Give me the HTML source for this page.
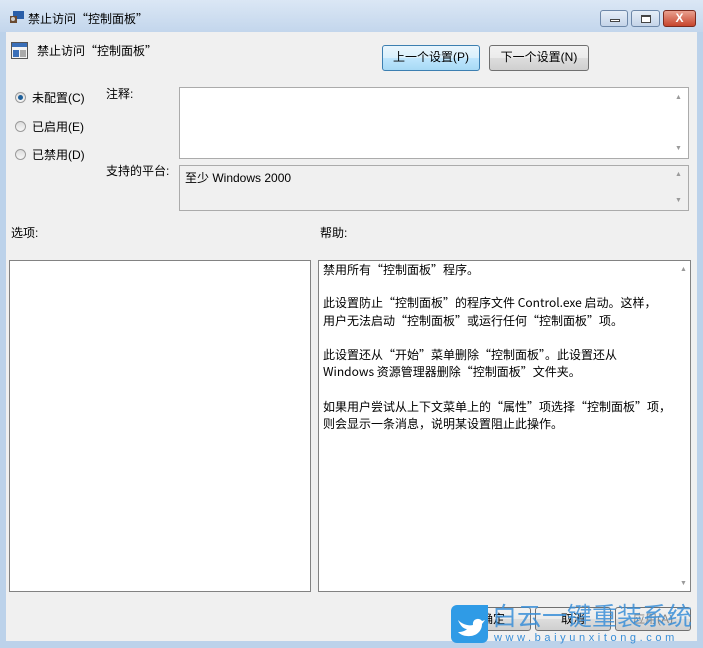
<!DOCTYPE html>
<html><head><meta charset="utf-8"><style>
*{margin:0;padding:0;box-sizing:border-box}
body{width:703px;height:648px;overflow:hidden;background:#bcd2ea;font-family:"Liberation Sans","Noto Sans CJK SC",sans-serif;font-size:12px;color:#000;position:relative}
.a{position:absolute;white-space:nowrap}
.h{font-family:"Noto Sans CJK SC",sans-serif;line-height:16px}
.title{left:0;top:0;width:703px;height:32px;background:linear-gradient(#dbe7f5,#c3d6ec)}
.body{left:6px;top:32px;width:691px;height:609px;background:#f0f0f0}
.btn{position:absolute;border:1px solid #707070;border-radius:3px;background:linear-gradient(#f2f2f2 0%,#ebebeb 50%,#dddddd 51%,#cfcfcf 100%);text-align:center;line-height:23px;font-size:12px}
.box{position:absolute;border:1px solid #8f8f8f;background:#fff}
.rad{position:absolute;width:11px;height:11px;border-radius:50%;border:1px solid #9a9a9a;background:linear-gradient(#ddd,#f8f8f8)}
.sa{position:absolute;color:#9a9a9a;font-size:7px}
.wb{position:absolute;border:1px solid #6d87a8;border-radius:3px}
</style></head><body>
<div class="a title"></div>
<div class="a body"></div>
<svg class="a" style="left:9px;top:10px" width="16" height="14"><rect x="4" y="1" width="11" height="8" fill="#2a5ea8"/><rect x="1" y="6" width="7" height="7" fill="#6a4a30"/><circle cx="4" cy="9" r="2" fill="#ccc"/></svg>
<div class="a" style="left:28px;top:10px">禁止访问<span class="h">“</span>控制面板<span class="h">”</span></div>
<div class="wb" style="left:600px;top:10px;width:28px;height:17px;background:linear-gradient(#e6eef8,#c4d4e8)"><div class="a" style="left:9px;top:8px;width:10px;height:3px;border:1px solid #444;background:#fff"></div></div>
<div class="wb" style="left:631px;top:10px;width:29px;height:17px;background:linear-gradient(#e6eef8,#c4d4e8)"><div class="a" style="left:9px;top:4px;width:10px;height:8px;border:1px solid #444;border-top-width:2px;background:#fff"></div></div>
<div class="wb" style="left:663px;top:10px;width:33px;height:17px;background:linear-gradient(#e9a08f,#c7452c);border-color:#7a2a1e;color:#fff;font-weight:bold;text-align:center;line-height:15px;font-size:12px">X</div>
<svg class="a" style="left:11px;top:42px" width="17" height="17"><rect x="0.5" y="0.5" width="16" height="16" fill="#f4f4f4" stroke="#555"/><rect x="1" y="1" width="15" height="4" fill="#3a6fb8"/><rect x="2" y="8" width="6" height="7" fill="#3a6fb8"/><rect x="9" y="8" width="6" height="7" fill="#aaa"/></svg>
<div class="a" style="left:37px;top:42px">禁止访问<span class="h">“</span>控制面板<span class="h">”</span></div>
<div class="btn" style="left:382px;top:45px;width:98px;height:26px;border-color:#3c7fb1;background:linear-gradient(#eaf6fd 0%,#d9f0fc 50%,#bee6fd 51%,#a7d9f5 100%)">上一个设置(P)</div>
<div class="btn" style="left:489px;top:45px;width:100px;height:26px">下一个设置(N)</div>
<div class="rad" style="left:15px;top:92px"><div class="a" style="left:2px;top:2px;width:5px;height:5px;border-radius:50%;background:#1d5f9a"></div></div>
<div class="a" style="left:32px;top:89px">未配置(C)</div>
<div class="rad" style="left:15px;top:121px"></div>
<div class="a" style="left:32px;top:118px">已启用(E)</div>
<div class="rad" style="left:15px;top:149px"></div>
<div class="a" style="left:32px;top:146px">已禁用(D)</div>
<div class="a" style="left:106px;top:85px">注释:</div>
<div class="box" style="left:179px;top:87px;width:510px;height:72px;border-color:#ababab"></div>
<div class="sa" style="left:675px;top:94px">▲</div><div class="sa" style="left:675px;top:145px">▼</div>
<div class="a" style="left:106px;top:162px">支持的平台:</div>
<div class="box" style="left:179px;top:165px;width:510px;height:46px;background:#f0f0f0;border-color:#ababab"></div>
<div class="a" style="left:185px;top:169px">至少 Windows 2000</div>
<div class="sa" style="left:675px;top:171px">▲</div><div class="sa" style="left:675px;top:197px">▼</div>
<div class="a" style="left:11px;top:224px">选项:</div>
<div class="a" style="left:320px;top:224px">帮助:</div>
<div class="box" style="left:9px;top:260px;width:302px;height:332px;border-color:#828282"></div>
<div class="box" style="left:318px;top:260px;width:373px;height:332px;border-color:#828282"></div>
<div class="sa" style="left:680px;top:266px">▲</div><div class="sa" style="left:680px;top:580px">▼</div>
<div class="a h" style="left:323px;top:262px">禁用所有“控制面板”程序。</div>
<div class="a h" style="left:323px;top:295px">此设置防止“控制面板”的程序文件 Control.exe 启动。这样，</div>
<div class="a h" style="left:323px;top:313px">用户无法启动“控制面板”或运行任何“控制面板”项。</div>
<div class="a h" style="left:323px;top:347px">此设置还从“开始”菜单删除“控制面板”。此设置还从</div>
<div class="a h" style="left:323px;top:364px">Windows 资源管理器删除“控制面板”文件夹。</div>
<div class="a h" style="left:323px;top:399px">如果用户尝试从上下文菜单上的“属性”项选择“控制面板”项，</div>
<div class="a h" style="left:323px;top:416px">则会显示一条消息，说明某设置阻止此操作。</div>
<div class="btn" style="left:455px;top:607px;width:76px;height:24px">确定</div>
<div class="btn" style="left:535px;top:607px;width:76px;height:24px">取消</div>
<div class="btn" style="left:615px;top:607px;width:76px;height:24px;color:#888">应用(A)</div>
<div class="a" style="left:451px;top:605px;width:37px;height:38px;background:#2f9be6;border-radius:6px 0 6px 6px"></div>
<svg class="a" style="left:455px;top:612px" width="30" height="26"><path d="M3 8 C8 13 14 14 18 13 C17 7 24 5 27 9 L30 8 L27 12 C27 20 20 25 12 24 C8 24 5 22 3 20 C7 20 10 19 12 17 C8 17 5 13 3 8 Z" fill="#fff"/></svg>
<div class="a" style="left:492px;top:602px;font-size:25px;line-height:30px;color:#3a8fd8;opacity:.85">白云一键重装系统</div>
<div class="a" style="left:494px;top:632px;font-size:11px;color:#3a8fd8;letter-spacing:3.6px">www.baiyunxitong.com</div>
</body></html>
